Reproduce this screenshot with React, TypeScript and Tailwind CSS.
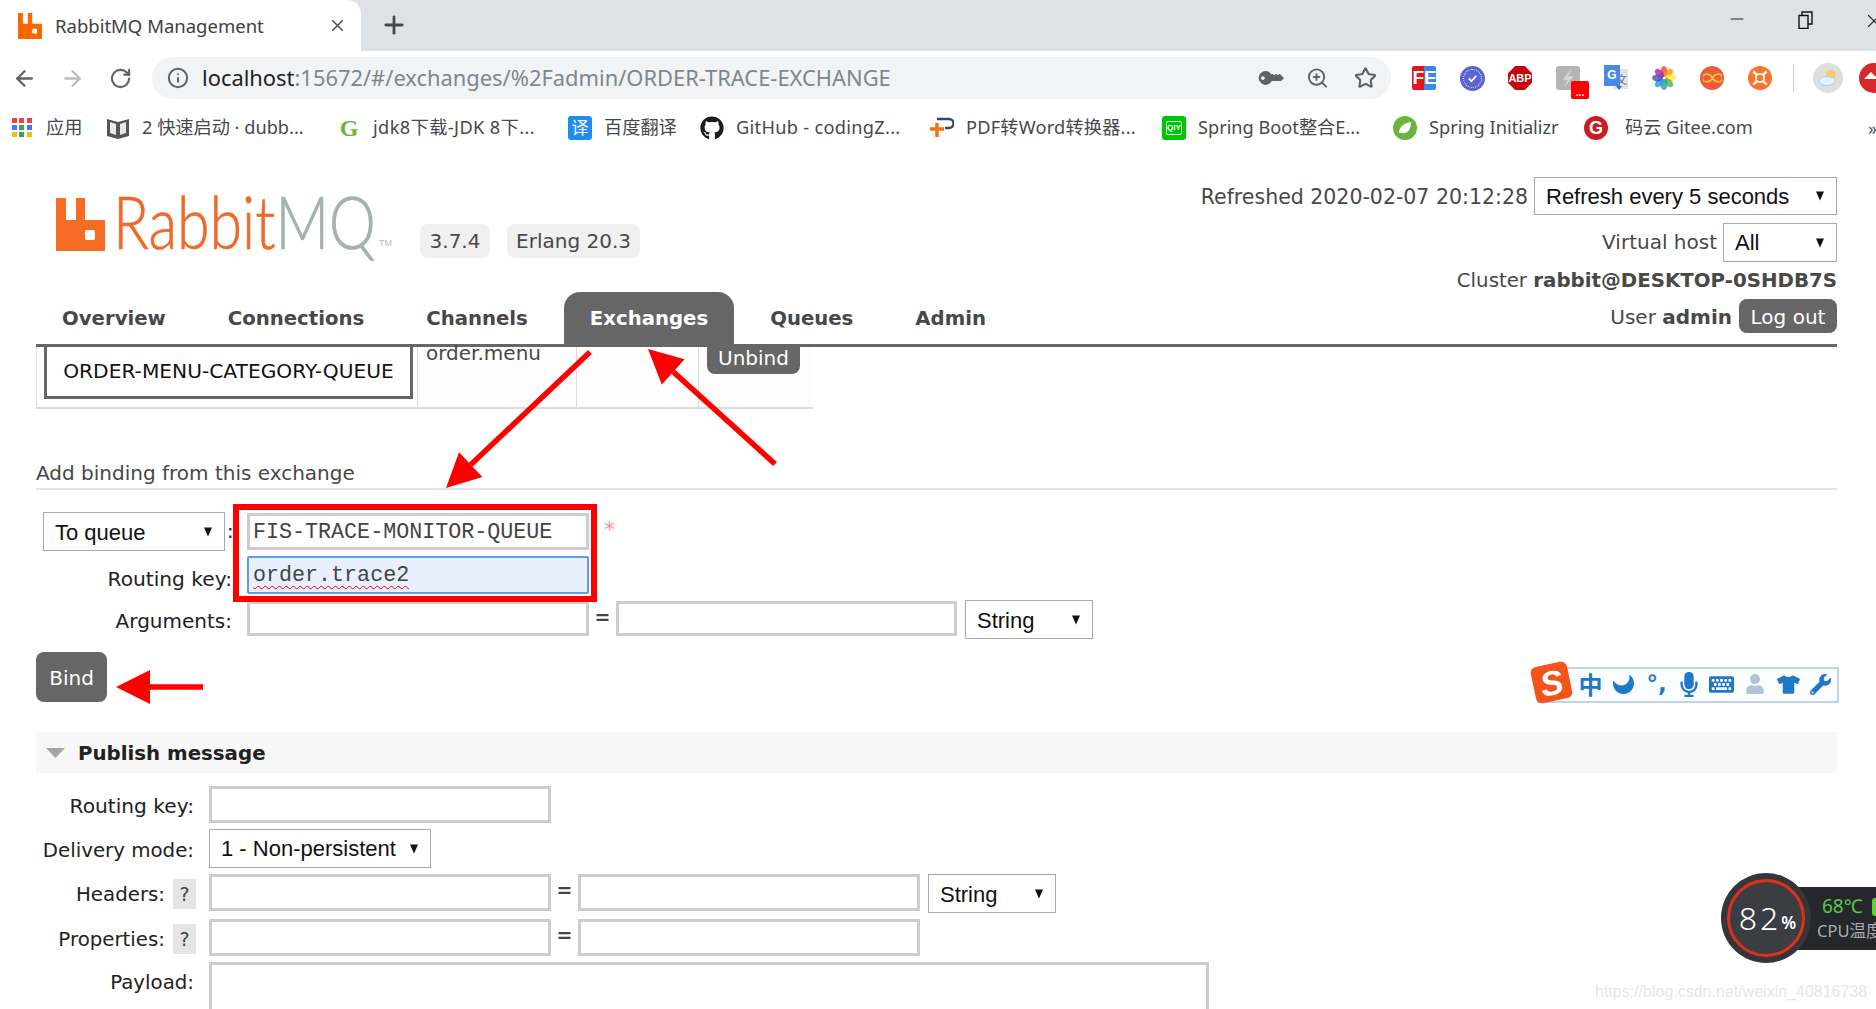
import React from "react";
import { ArrowLeft, ArrowRight, RotateCw, Info, ZoomIn, Star, Plus, X, Minus } from "lucide-react";
import { FaGithub, FaKey, FaTshirt, FaMoon, FaUser, FaMicrophone, FaKeyboard, FaWrench } from "react-icons/fa";

const ui = "font-['Noto_Sans','Noto_Sans_CJK_SC',sans-serif]";
const verd = "font-['DejaVu_Sans',sans-serif]";
const arial = "font-['Liberation_Sans',sans-serif]";
const mono = "font-['Liberation_Mono',monospace]";

function RabbitIcon({ className }: { className: string }) {
  return (
    <svg viewBox="0 0 49 53" className={className}>
      <path fillRule="evenodd" fill="currentColor" d="M0 0H10V22H20V0H29V22H49V53H0ZM31 32a2 2 0 00-2 2V40a2 2 0 002 2H37a2 2 0 002-2V34a2 2 0 00-2-2Z" />
    </svg>
  );
}

function Bookmark({ icon, label, className, labelClass }: { icon: React.ReactNode; label: string; className: string; labelClass?: string }) {
  return (
    <div className={`flex items-center shrink-0 ${className}`}>
      <div className="w-6 h-6 flex items-center justify-center shrink-0">{icon}</div>
      <span className={`whitespace-nowrap text-[18.2px] text-[#46484c] ${labelClass ?? "ml-3"}`}>{label}</span>
    </div>
  );
}

function Arrow() {
  return (
    <svg viewBox="0 0 8 9" className="w-[8px] h-[10px] shrink-0">
      <path d="M0 0H8L4 9Z" fill="#111" />
    </svg>
  );
}

function Sel({ label, className }: { label: string; className: string }) {
  return (
    <div className={`flex items-center justify-between border border-[#a9a9a9] bg-white text-[22px] text-[#111] pr-[12px] shrink-0 ${arial} ${className}`}>
      <span className="whitespace-nowrap">{label}</span>
      <Arrow />
    </div>
  );
}

function Box({ className, children }: { className: string; children?: React.ReactNode }) {
  return (
    <div className={`border-[3px] border-[#cdcdcd] bg-white shrink-0 flex items-center overflow-hidden ${mono} text-[21.7px] text-[#444] pl-[3px] pt-[3px] ${className}`}>
      {children}
    </div>
  );
}

function Label({ children, className }: { children: React.ReactNode; className: string }) {
  return <div className={`text-right text-[#222] whitespace-nowrap shrink-0 ${className}`}>{children}</div>;
}

function Help() {
  return <div className="w-[23px] h-[30px] bg-[#e5e5e5] flex items-center justify-center text-[19px] text-[#444] shrink-0">?</div>;
}

function Eq({ className }: { className?: string }) {
  return <div className={`w-[27px] text-center text-[19px] text-[#444] font-bold shrink-0 ${className ?? ""}`}>=</div>;
}

function TabLink({ label, active }: { label: string; active?: boolean }) {
  return (
    <div
      className={`h-[52px] px-[26px] mr-[10px] pt-[2px] flex items-center text-[19.7px] font-bold rounded-t-[16px] whitespace-nowrap ${
        active ? "bg-[#666] text-white" : "text-[#484848]"
      }`}
    >
      {label}
    </div>
  );
}

function RedArrow({ x1, y1, x2, y2 }: { x1: number; y1: number; x2: number; y2: number }) {
  const a = Math.atan2(y2 - y1, x2 - x1);
  const len = 34;
  const w = 17;
  const bx = x2 - Math.cos(a) * len;
  const by = y2 - Math.sin(a) * len;
  const px = -Math.sin(a) * w;
  const py = Math.cos(a) * w;
  return (
    <g>
      <line x1={x1} y1={y1} x2={bx} y2={by} stroke="#ff0000" strokeWidth="5.5" />
      <polygon points={`${x2},${y2} ${bx + px},${by + py} ${bx - px},${by - py}`} fill="#ff0000" />
    </g>
  );
}

function Extensions() {
  return (
    <div className="flex items-center ml-[21px] h-[42px] shrink-0">
      <div className="w-[24px] h-[24px] rounded-[2px] flex overflow-hidden text-white font-bold text-[19px] leading-[24px] font-['Liberation_Sans',sans-serif]">
        <span className="w-[12px] bg-[#e8141c] text-right">F</span>
        <span className="w-[12px] bg-[#3b87ea]">E</span>
      </div>
      <div className="ml-[24px] w-[25px] h-[25px] rounded-full bg-[#5d63d0] flex items-center justify-center">
        <div className="w-[19px] h-[19px] rounded-full border border-dotted border-white flex items-center justify-center">
          <svg viewBox="0 0 12 12" className="w-[11px] h-[11px]">
            <path d="M2 6l3 3 5-6" stroke="#fff" strokeWidth="2" fill="none" />
          </svg>
        </div>
      </div>
      <div className="ml-[23px] w-[24px] h-[24px] bg-[#c8050d] flex items-center justify-center text-white font-bold text-[11px] [clip-path:polygon(30%_0,70%_0,100%_30%,100%_70%,70%_100%,30%_100%,0_70%,0_30%)] font-['Liberation_Sans',sans-serif]">
        ABP
      </div>
      <div className="relative ml-[24px] w-[24px] h-[24px] rounded-[3px] bg-[#b4b4b4] flex items-center justify-center">
        <svg viewBox="0 0 12 12" className="w-[22px] h-[22px]">
          <path d="M8 1L3 7h3l-2 4 5-6H6z" fill="#d8d8d8" />
        </svg>
        <div className="absolute left-[15px] top-[15px] w-[18px] h-[18px] rounded-[2px] bg-[#f00] text-white text-[10px] font-bold leading-[24px] text-center font-['Liberation_Sans',sans-serif]">...</div>
      </div>
      <div className="ml-[24px] relative w-[24px] h-[26px]">
        <div className="absolute right-0 top-[4px] w-[15px] h-[20px] bg-[#e3e3e3] text-[#667] text-[11px] text-right pr-[1px] pt-[4px] leading-[14px]">文</div>
        <div className="absolute left-0 top-0 w-[16px] h-[21px] bg-[#4a89e8] text-white text-[12px] font-bold text-center leading-[20px] font-['Liberation_Sans',sans-serif]">G</div>
        <div className="absolute left-[12px] top-[21px] w-0 h-0 border-x-[3px] border-x-transparent border-t-[4px] border-t-[#3a6fc4]" />
      </div>
      <svg viewBox="0 0 24 24" className="ml-[24px] w-[24px] h-[26px]">
        {["#f44336", "#ff9800", "#ffeb3b", "#4caf50", "#26a69a", "#2196f3", "#3f51b5", "#9c27b0"].map((c, i) => (
          <ellipse key={c} cx="12" cy="5.5" rx="3.4" ry="5.5" fill={c} opacity="0.8" transform={`rotate(${i * 45} 12 12)`} />
        ))}
      </svg>
      <div className="ml-[24px] w-[24px] h-[24px] rounded-full bg-[#ee5a3d] flex items-center justify-center">
        <svg viewBox="0 0 20 10" className="w-[19px] h-[10px]">
          <path d="M10 5C8 1 5 1 3.5 1a4 4 0 000 8C5 9 8 9 10 5c2-4 5-4 6.5-4a4 4 0 010 8C15 9 12 9 10 5Z" fill="none" stroke="#f6c531" strokeWidth="1.8" />
        </svg>
      </div>
      <div className="ml-[24px] w-[24px] h-[24px] rounded-full bg-[#fb7428] flex items-center justify-center">
        <svg viewBox="0 0 24 24" className="w-[20px] h-[20px]">
          <circle cx="12" cy="12" r="5" stroke="#fff" strokeWidth="2" fill="none" />
          <path d="M4 4l4 4M20 4l-4 4M4 20l4-4M20 20l-4-4" stroke="#fff" strokeWidth="3" />
        </svg>
      </div>
      <div className="ml-[21px] w-px h-[28px] bg-[#d0d0d0]" />
      <div className="ml-[19px] w-[30px] h-[30px] rounded-full bg-[#dedede] flex items-center justify-center">
        <svg viewBox="0 0 24 24" className="w-[24px] h-[24px]">
          <circle cx="15" cy="9" r="5" fill="#f4cf67" />
          <ellipse cx="11" cy="15" rx="8" ry="4.6" fill="#e4f1fb" stroke="#a9cbe6" />
        </svg>
      </div>
      <div className="ml-[16px] w-[30px] h-[30px] rounded-full bg-[#d9282b] shrink-0 relative overflow-hidden">
        <div className="absolute left-[5px] top-[9px] w-0 h-0 border-x-[7px] border-x-transparent border-b-[7px] border-b-white" />
      </div>
    </div>
  );
}

export default function App() {
  return (
    <div className="relative w-[1876px] h-[1009px] overflow-hidden bg-white">
      {/* Tab strip */}
      <div className={`h-[51px] bg-[#dee1e6] flex ${ui}`}>
        <div className="w-[361px] h-[51px] bg-white rounded-tr-[14px] flex items-center pl-[18px]">
          <RabbitIcon className="w-[24px] h-[26px] text-[#ff6600] shrink-0" />
          <span className="ml-[13px] text-[18.5px] text-[#3c4043] whitespace-nowrap">RabbitMQ Management</span>
          <X className="ml-auto mr-[14px] w-[19px] h-[19px] text-[#55585c]" strokeWidth={2.2} />
        </div>
        <Plus className="ml-[19px] mt-[11px] w-[28px] h-[28px] text-[#45484c]" strokeWidth={2.4} />
        <div className="ml-auto flex items-start pt-[8px] text-[#222]">
          <Minus className="w-[20px] h-[22px] mr-[51px]" strokeWidth={1.4} />
          <svg viewBox="0 0 16 18" className="w-[16px] h-[18px] mt-[3px] mr-[62px]">
            <path d="M1 4.5h9v13H1zM4 4.5V1h10v12h-4" fill="none" stroke="#111" strokeWidth="1.4" />
          </svg>
          <X className="w-[22px] h-[24px] -mr-[9px] absolute right-[0px] top-[9px]" strokeWidth={1.2} />
        </div>
      </div>

      {/* Toolbar */}
      <div className={`h-[56px] flex items-start pt-[6px] ${ui}`}>
        <div className="w-[48px] h-[42px] shrink-0 flex items-center justify-center">
          <ArrowLeft className="w-[25px] h-[25px] text-[#5f6368]" strokeWidth={2.2} />
        </div>
        <div className="w-[48px] h-[42px] shrink-0 flex items-center justify-center">
          <ArrowRight className="w-[25px] h-[25px] text-[#babcbe]" strokeWidth={2.2} />
        </div>
        <div className="w-[48px] h-[42px] shrink-0 flex items-center justify-center">
          <RotateCw className="w-[23px] h-[23px] text-[#5f6368]" strokeWidth={2.2} />
        </div>
        <div className="ml-[8px] w-[1239px] h-[42px] shrink-0 rounded-full bg-[#f1f3f4] flex items-center pl-[15px] pr-[14px]">
          <Info className="w-[22px] h-[22px] text-[#5f6368]" strokeWidth={2.2} />
          <span className="ml-[13px] text-[21.9px] whitespace-nowrap text-[#202124]">
            localhost<span className="text-[#80868b]">:15672/#/exchanges/%2Fadmin/ORDER-TRACE-EXCHANGE</span>
          </span>
          <div className="ml-auto flex items-center gap-[25px] text-[#5f6368]">
            <FaKey className="w-[22px] h-[20px] rotate-[-135deg]" />
            <ZoomIn className="w-[23px] h-[24px]" strokeWidth={2} />
            <Star className="w-[23px] h-[24px]" strokeWidth={2.2} />
          </div>
        </div>
        <Extensions />
      </div>

      {/* Bookmarks */}
      <div className={`h-[40px] pt-[2px] flex items-center pl-[10px] ${ui}`}>
        <Bookmark
          className="w-[96px]"
          label="应用"
          icon={
            <div className="grid grid-cols-3 gap-[2px] w-[20px]">
              {["#e8453c", "#e8453c", "#e8453c", "#3b7ded", "#34a853", "#3b7ded", "#fbbc05", "#34a853", "#fbbc05"].map((c, i) => (
                <div key={i} className="w-[5px] h-[5px]" style={{ background: c }} />
              ))}
            </div>
          }
        />
        <Bookmark
          className="w-[231px]"
          label="2 快速启动 · dubb..."
          icon={
            <svg viewBox="0 0 24 24" className="w-[24px] h-[24px]">
              <path d="M1 3l11 3 11-3v17l-11 3-11-3z" fill="#555" />
              <path d="M4 6l6 2v11l-6-2zM20 6l-6 2v11l6-2z" fill="#e8e8e8" />
            </svg>
          }
        />
        <Bookmark
          className="w-[231px]"
          labelClass="ml-3 tracking-[0.4px]"
          label="jdk8下载-JDK 8下..."
          icon={<span className="text-[#6ab52f] text-[24px] font-bold leading-none font-['Liberation_Serif',serif]">G</span>}
        />
        <Bookmark
          className="w-[132px]"
          label="百度翻译"
          icon={<div className="w-[24px] h-[24px] rounded-[3px] bg-[#1e8cf0] text-white text-[17px] leading-[24px] text-center">译</div>}
        />
        <Bookmark
          className="w-[230px]"
          labelClass="ml-3 tracking-[0.3px]"
          label="GitHub - codingZ..."
          icon={<FaGithub className="w-[24px] h-[24px] text-[#1b1b1b]" />}
        />
        <Bookmark
          className="w-[232px]"
          labelClass="ml-3 tracking-[0.2px]"
          label="PDF转Word转换器..."
          icon={
            <svg viewBox="0 0 24 24" className="w-[24px] h-[24px]">
              <path d="M7 3h12a4 4 0 010 9h-4" fill="none" stroke="#2a4a7a" strokeWidth="2.5" />
              <path d="M0 13h14M7 7v14" stroke="#f47216" strokeWidth="3.5" />
            </svg>
          }
        />
        <Bookmark
          className="w-[231px]"
          label="Spring Boot整合E..."
          icon={
            <div className="w-[24px] h-[24px] rounded-[3px] bg-[#00c800] flex items-center justify-center">
              <div className="w-[16px] h-[14px] rounded-[2px] border border-white text-white text-[8px] leading-[12px] text-center font-bold font-['Liberation_Sans',sans-serif]">QIY</div>
            </div>
          }
        />
        <Bookmark
          className="w-[191px]"
          label="Spring Initializr"
          icon={
            <div className="w-[24px] h-[24px] rounded-full bg-[#6db33f] flex items-center justify-center">
              <svg viewBox="0 0 16 16" className="w-[16px] h-[16px]">
                <path d="M2 13C2 6 8 3 14 2c0 7-3 12-9 11" fill="#fff" />
              </svg>
            </div>
          }
        />
        <Bookmark
          className="w-[284px]"
          labelClass="ml-[17px]"
          label="码云 Gitee.com"
          icon={
            <div className="w-[24px] h-[24px] rounded-full bg-[#c71d23] flex items-center justify-center text-white text-[18px] font-bold leading-none font-['Liberation_Sans',sans-serif]">G</div>
          }
        />
        <span className="text-[18px] text-[#555] whitespace-nowrap">»</span>
      </div>

      {/* RabbitMQ page */}
      <div className={`px-[36px] w-[1873px] text-[#484848] ${verd}`}>
        <div className="flex justify-between border-b-[3px] border-[#666]">
          <div>
            <div className="flex items-end h-[111px] pl-[20px]">
              <RabbitIcon className="w-[49px] h-[53px] text-[#f56d25] mb-[7px]" />
              <div className="w-[287px] h-[70px] relative shrink-0">
                <span className="absolute left-[8px] bottom-[-6px] text-[72px] leading-[1.2] font-light [-webkit-text-stroke:0.7px_currentColor] origin-bottom-left scale-x-[0.82] whitespace-nowrap font-['Lato',sans-serif]">
                  <span className="text-[#f0692a]">Rabbit</span>
                  <span className="text-[#a4b2ab]">MQ</span>
                </span>
                <span className="absolute right-[0px] bottom-[8px] text-[9px] text-[#b5bdb8] font-['Liberation_Sans',sans-serif]">TM</span>
              </div>
              <div className="ml-[28px] w-[70px] h-[34px] bg-[#f0f0f0] rounded-[8px] flex items-center justify-center text-[20px] shrink-0">3.7.4</div>
              <div className="ml-[17px] w-[133px] h-[34px] bg-[#f0f0f0] rounded-[8px] flex items-center justify-center text-[20px] shrink-0">Erlang 20.3</div>
            </div>
            <div className="flex mt-[34px]">
              <TabLink label="Overview" />
              <TabLink label="Connections" />
              <TabLink label="Channels" />
              <TabLink label="Exchanges" active />
              <TabLink label="Queues" />
              <TabLink label="Admin" />
            </div>
          </div>
          <div className="flex flex-col items-end pt-[30px] text-[20px]">
            <div className="flex items-center h-[38px]">
              <span className="mr-[6px] whitespace-nowrap text-[20.5px] pt-[2px]">Refreshed 2020-02-07 20:12:28</span>
              <Sel label="Refresh every 5 seconds" className="w-[303px] h-[38px] pl-[11px]" />
            </div>
            <div className="flex items-center h-[39px] mt-[8px]">
              <span className="mr-[6px] pb-[1px]">Virtual host</span>
              <Sel label="All" className="w-[114px] h-[39px] pl-[11px]" />
            </div>
            <div className="h-[24px] mt-[7px] flex items-center whitespace-nowrap text-[19.8px]">
              Cluster&nbsp;<b>rabbit@DESKTOP-0SHDB7S</b>
            </div>
            <div className="flex items-center h-[34px] mt-[6px] mb-[10px]">
              <span className="pt-[1px]">
                User&nbsp;<b>admin</b>
              </span>
              <div className="ml-[7px] w-[98px] h-[34px] rounded-[8px] bg-[#666] text-white flex items-center justify-center pt-[1px]">Log out</div>
            </div>
          </div>
        </div>

        {/* Clipped bindings table */}
        <div className="flex w-[777px] h-[62px] border-b-2 border-l border-[#dcdcdc] bg-[#fdfdfd] text-[20px]">
          <div className="w-[381px] pl-[7px] border-r border-[#dcdcdc]">
            <div className="w-[369px] h-[52px] border-[3px] border-t-0 border-[#666] bg-white flex items-center justify-center text-[20.2px] text-[#111]">
              ORDER-MENU-CATEGORY-QUEUE
            </div>
          </div>
          <div className="w-[159px] pl-[8px] border-r border-[#dcdcdc] leading-[13px]">order.menu</div>
          <div className="w-[122px] border-r border-[#dcdcdc]" />
          <div className="pl-[8px]">
            <div className="w-[93px] h-[27px] bg-[#666] rounded-b-[8px] text-white flex items-center justify-center pb-[6px]">Unbind</div>
          </div>
        </div>

        {/* Add binding */}
        <div className="mt-[53px] h-[28px] flex items-center text-[20px] border-b-2 border-[#e4e4e4] pb-[5px]">Add binding from this exchange</div>

        <div className="mt-[22px] flex items-start h-[39px]">
          <Sel label="To queue" className="ml-[7px] w-[182px] h-[39px] pl-[11px] pt-[1px]" />
          <span className="w-[22px] pl-[2px] text-[19.5px] text-[#222] leading-[39px]">:</span>
          <Box className="mt-[1px] w-[342px] h-[37px]">FIS-TRACE-MONITOR-QUEUE</Box>
          <span className="ml-[15px] mt-[1px] text-[22px] text-[#ff8f8f]">*</span>
        </div>
        <div className="mt-[5px] flex items-start h-[38px]">
          <Label className="w-[196px] mr-[15px] text-[20.2px] leading-[47px]">Routing key:</Label>
          <Box className="w-[342px] h-[38px] rounded-[2px] !bg-[#e8f0fe] !border-[#5b9cf2] !border-2">
            <span className="underline decoration-wavy decoration-[#f00] decoration-1 underline-offset-[4px] pl-[1px]">order.trace2</span>
          </Box>
        </div>
        <div className="mt-[6px] flex items-start h-[39px]">
          <Label className="w-[196px] mr-[15px] text-[20px] leading-[43px]">Arguments:</Label>
          <Box className="mt-[1px] w-[342px] h-[35px]" />
          <Eq className="leading-[35px]" />
          <Box className="mt-[1px] w-[341px] h-[35px]" />
          <Sel label="String" className="ml-[8px] w-[128px] h-[39px] pl-[11px] pt-[1px]" />
        </div>

        <div className="mt-[13px] w-[71px] h-[50px] rounded-[8px] bg-[#666] text-white text-[20px] flex items-center justify-center pt-[1px]">Bind</div>

        {/* Publish message */}
        <div className="mt-[30px] h-[41px] bg-[#f7f7f7] flex items-center pl-[10px]">
          <svg viewBox="0 0 19 10" className="w-[19px] h-[10px] shrink-0">
            <path d="M0 0H19L9.5 10Z" fill="#a5a5a5" />
          </svg>
          <b className="ml-[13px] pt-[2px] text-[19.8px] text-[#222]">Publish message</b>
        </div>

        <div className="mt-[13px] flex items-center h-[37px]">
          <Label className="w-[158px] mr-[15px] mt-[4px] text-[20.2px]">Routing key:</Label>
          <Box className="w-[342px] h-[37px]" />
        </div>
        <div className="mt-[6px] flex items-center h-[39px]">
          <Label className="w-[158px] mr-[15px] mt-[4px] text-[19.8px]">Delivery mode:</Label>
          <Sel label="1 - Non-persistent" className="w-[222px] h-[39px] pl-[11px]" />
        </div>
        <div className="mt-[6px] flex items-start h-[39px]">
          <Label className="w-[129px] mr-[8px] mt-[6px] text-[19.8px] leading-[30px]">Headers:</Label>
          <div className="mt-[5px]">
            <Help />
          </div>
          <Box className="ml-[13px] w-[342px] h-[37px]" />
          <Eq className="leading-[33px]" />
          <Box className="w-[342px] h-[37px]" />
          <Sel label="String" className="ml-[8px] w-[128px] h-[39px] pl-[11px] pt-[1px]" />
        </div>
        <div className="mt-[6px] flex items-start h-[37px]">
          <Label className="w-[129px] mr-[8px] mt-[6px] text-[19.8px] leading-[30px]">Properties:</Label>
          <div className="mt-[5px]">
            <Help />
          </div>
          <Box className="ml-[13px] w-[342px] h-[37px]" />
          <Eq className="leading-[33px]" />
          <Box className="w-[342px] h-[37px]" />
        </div>
        <div className="mt-[6px] flex items-start">
          <Label className="w-[158px] mr-[15px] mt-[6px] text-[19.8px]">Payload:</Label>
          <Box className="w-[1000px] h-[120px]" />
        </div>
      </div>

      {/* Annotations */}
      <svg className="absolute left-0 top-0 w-[1876px] h-[1009px] pointer-events-none" viewBox="0 0 1876 1009">
        <RedArrow x1={590} y1={352} x2={446} y2={488} />
        <RedArrow x1={775} y1={464} x2={648} y2={349} />
        <RedArrow x1={203} y1={687} x2={116} y2={687} />
      </svg>
      <div className="absolute left-[233px] top-[504px] w-[364px] h-[98px] border-[6px] border-[#f00]" />

      {/* Sogou IME */}
      <div className="absolute left-[1537px] top-[667px] w-[302px] h-[36px] border-2 border-[#c0d4e6] bg-[#fafcfe] flex items-center pl-[35px] pb-[2px] text-[#1f77c9]">
        <span className="w-[33px] text-center text-[24px] font-bold leading-none font-['Noto_Sans_CJK_SC',sans-serif]">中</span>
        <div className="w-[34px] flex justify-center">
          <FaMoon className="w-[21px] h-[21px] rotate-[-90deg]" />
        </div>
        <span className="w-[32px] text-center text-[23px] font-bold leading-none font-['DejaVu_Sans',sans-serif]">°,</span>
        <div className="w-[33px] flex justify-center">
          <FaMicrophone className="w-[24px] h-[25px]" />
        </div>
        <div className="w-[33px] flex justify-center">
          <FaKeyboard className="w-[25px] h-[25px]" />
        </div>
        <div className="w-[34px] flex justify-center">
          <FaUser className="w-[20px] h-[20px] text-[#b4c4d8]" />
        </div>
        <div className="w-[32px] flex justify-center">
          <FaTshirt className="w-[23px] h-[21px]" />
        </div>
        <div className="w-[33px] flex justify-center">
          <FaWrench className="w-[21px] h-[21px]" />
        </div>
      </div>
      <div className="absolute left-[1533px] top-[664px] w-[37px] h-[37px] rounded-[6px] rotate-[-12deg] bg-[#f4541a] flex items-center justify-center text-white text-[34px] italic font-bold leading-none font-['Liberation_Sans',sans-serif]">
        S
      </div>

      {/* CPU widget */}
      <div className="absolute left-[1790px] top-[887px] w-[86px] h-[63px] bg-[#25272b] pl-[32px] pt-[6px] font-['Noto_Sans','Noto_Sans_CJK_SC',sans-serif] overflow-hidden">
        <div className="text-[19px] leading-[26px] text-[#58c94a] whitespace-nowrap">68℃</div>
        <div className="text-[16.5px] leading-[24px] text-[#a9adb3] -ml-[5px] whitespace-nowrap">CPU温度</div>
      </div>
      <div className="absolute left-[1872px] top-[898px] w-[6px] h-[18px] rounded-full bg-[#5ed038]" />
      <div className="absolute left-[1721px] top-[873px] w-[90px] h-[90px] rounded-full bg-[#34363b] flex items-center justify-center">
        <div className="w-[78px] h-[78px] rounded-full border-[3px] border-[#e0301a] bg-[#3b3d43] flex items-center justify-center pl-[3px] text-white font-['Noto_Sans',sans-serif]">
          <span className="text-[32px] tracking-[3px] leading-none font-light">82</span>
          <span className="text-[17px] font-semibold leading-none mt-[8px]">%</span>
        </div>
      </div>

      {/* Watermark */}
      <div className="absolute left-[1595px] top-[980px] text-[16px] text-[#e6e6e6] whitespace-nowrap font-['Liberation_Sans',sans-serif]">
        https://blog.csdn.net/weixin_40816738
      </div>
    </div>
  );
}
